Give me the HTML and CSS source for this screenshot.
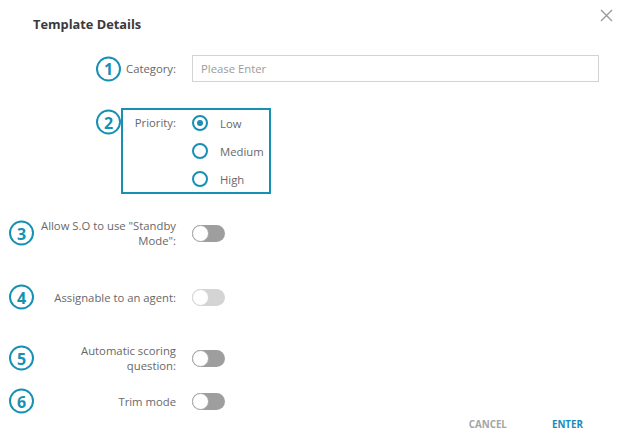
FILE: index.html
```html
<!DOCTYPE html>
<html lang="en">
<head>
    <meta charset="UTF-8">
    <title>Template Details</title>
    <link rel="stylesheet" href="styles.css">
</head>
<body>
    <div class="dialog">
        <div class="dialog-header">
            <div class="dialog-title">Template Details</div>
            <button class="close-btn" aria-label="Close">
                <svg width="13" height="13" viewBox="0 0 13 13">
                    <path d="M1 1 L12 12 M12 1 L1 12" stroke="#9a9a9a" stroke-width="1.4" fill="none"/>
                </svg>
            </button>
        </div>

        <div class="form">
            <div class="field field-category">
                <span class="badge badge-inner">1</span>
                <label class="field-label">Category:</label>
                <input class="text-input" type="text" placeholder="Please Enter">
            </div>

            <div class="field field-priority">
                <span class="badge badge-inner badge-top">2</span>
                <div class="highlight-box"></div>
                <label class="field-label label-top">Priority:</label>
                <div class="radio-group">
                    <div class="radio-row"><span class="radio checked"></span>Low</div>
                    <div class="radio-row"><span class="radio"></span>Medium</div>
                    <div class="radio-row"><span class="radio"></span>High</div>
                </div>
            </div>

            <div class="field field-standby">
                <span class="badge">3</span>
                <label class="field-label">Allow S.O to use "Standby Mode":</label>
                <div class="toggle"><span class="thumb"></span></div>
            </div>

            <div class="field field-agent">
                <span class="badge">4</span>
                <label class="field-label">Assignable to an agent:</label>
                <div class="toggle disabled"><span class="thumb"></span></div>
            </div>

            <div class="field field-scoring">
                <span class="badge">5</span>
                <label class="field-label">Automatic scoring question:</label>
                <div class="toggle"><span class="thumb"></span></div>
            </div>

            <div class="field field-trim">
                <span class="badge">6</span>
                <label class="field-label">Trim mode</label>
                <div class="toggle"><span class="thumb"></span></div>
            </div>
        </div>

        <div class="dialog-footer">
            <button class="btn btn-cancel">CANCEL</button>
            <button class="btn btn-enter">ENTER</button>
        </div>
    </div>
</body>
</html>
```

FILE: styles.css
```css
html, body {
    margin: 0;
    background: #ffffff;
}

.dialog {
    width: 617px;
    height: 444px;
    font-family: 'Open Sans', 'Noto Sans', sans-serif;
    color: #666666;
    box-sizing: border-box;
}

.dialog-header {
    display: flex;
    justify-content: space-between;
    align-items: flex-start;
    height: 55px;
}

.dialog-title {
    margin: 15px 0 0 33px;
    font-size: 12.8px;
    font-weight: bold;
    color: #3a3a3a;
}

.close-btn {
    margin: 9px 4px 0 0;
    padding: 0;
    border: none;
    background: none;
    line-height: 0;
}

.field {
    position: relative;
    display: grid;
    grid-template-columns: 176px 1fr;
    column-gap: 16px;
    align-items: center;
    padding-right: 18px;
    height: 30px;
}

.field-label {
    justify-self: end;
    text-align: right;
    font-size: 11.3px;
    line-height: 15px;
    color: #686868;
}

.field-category {
    height: 27px;
}

.field-priority {
    margin-top: 27px;
    height: 84px;
    align-items: start;
}

.label-top {
    margin-top: 6px;
}

.field-standby { margin-top: 25px; }
.field-standby .field-label { max-width: 138px; }
.field-agent { margin-top: 34px; }
.field-scoring { margin-top: 31px; }
.field-scoring .field-label { max-width: 100px; }
.field-trim { margin-top: 13px; }

.text-input {
    height: 27px;
    box-sizing: border-box;
    border: 1px solid #d3d3d3;
    padding: 0 8px;
    font-family: inherit;
    font-size: 11.3px;
    color: #444444;
    outline: none;
}

.text-input::placeholder {
    color: #9b9b9b;
}

.badge {
    position: absolute;
    left: 9px;
    top: 50%;
    transform: translateY(-50%);
    width: 25px;
    height: 25px;
    box-sizing: border-box;
    border: 2.5px solid #1790b3;
    border-radius: 50%;
    display: flex;
    justify-content: center;
    align-items: center;
    font-size: 16px;
    font-weight: bold;
    color: #1790b3;
}

.badge-inner {
    left: 96px;
}

.badge-top {
    top: 13px;
}

.highlight-box {
    position: absolute;
    left: 121px;
    top: -1px;
    width: 150px;
    height: 86px;
    box-sizing: border-box;
    border: 2px solid #1790b3;
    pointer-events: none;
}

.radio-group {
    display: flex;
    flex-direction: column;
}

.radio-row {
    display: flex;
    align-items: center;
    gap: 12px;
    height: 28px;
    font-size: 11.3px;
    color: #686868;
}

.radio {
    width: 16px;
    height: 16px;
    box-sizing: border-box;
    border: 2px solid #1790b3;
    border-radius: 50%;
    display: flex;
    justify-content: center;
    align-items: center;
}

.radio.checked::after {
    content: "";
    width: 6px;
    height: 6px;
    border-radius: 50%;
    background: #1790b3;
}

.toggle {
    width: 33px;
    height: 17px;
    border-radius: 9px;
    background: #9e9e9e;
    position: relative;
}

.toggle .thumb {
    position: absolute;
    left: 0;
    top: 0;
    width: 17px;
    height: 17px;
    box-sizing: border-box;
    border-radius: 50%;
    background: #ffffff;
    border: 1px solid #a8a8a8;
}

.toggle.disabled {
    background: #d4d4d4;
}

.toggle.disabled .thumb {
    border-color: #d4d4d4;
}

.dialog-footer {
    display: flex;
    justify-content: flex-end;
    gap: 45px;
    padding-right: 34px;
    height: 16px;
    align-items: center;
}

.btn {
    padding: 0;
    border: none;
    background: none;
    font-family: inherit;
    font-size: 9.8px;
    font-weight: bold;
}

.btn-cancel {
    color: #a5a5a5;
}

.btn-enter {
    color: #1a8bb8;
}
```
